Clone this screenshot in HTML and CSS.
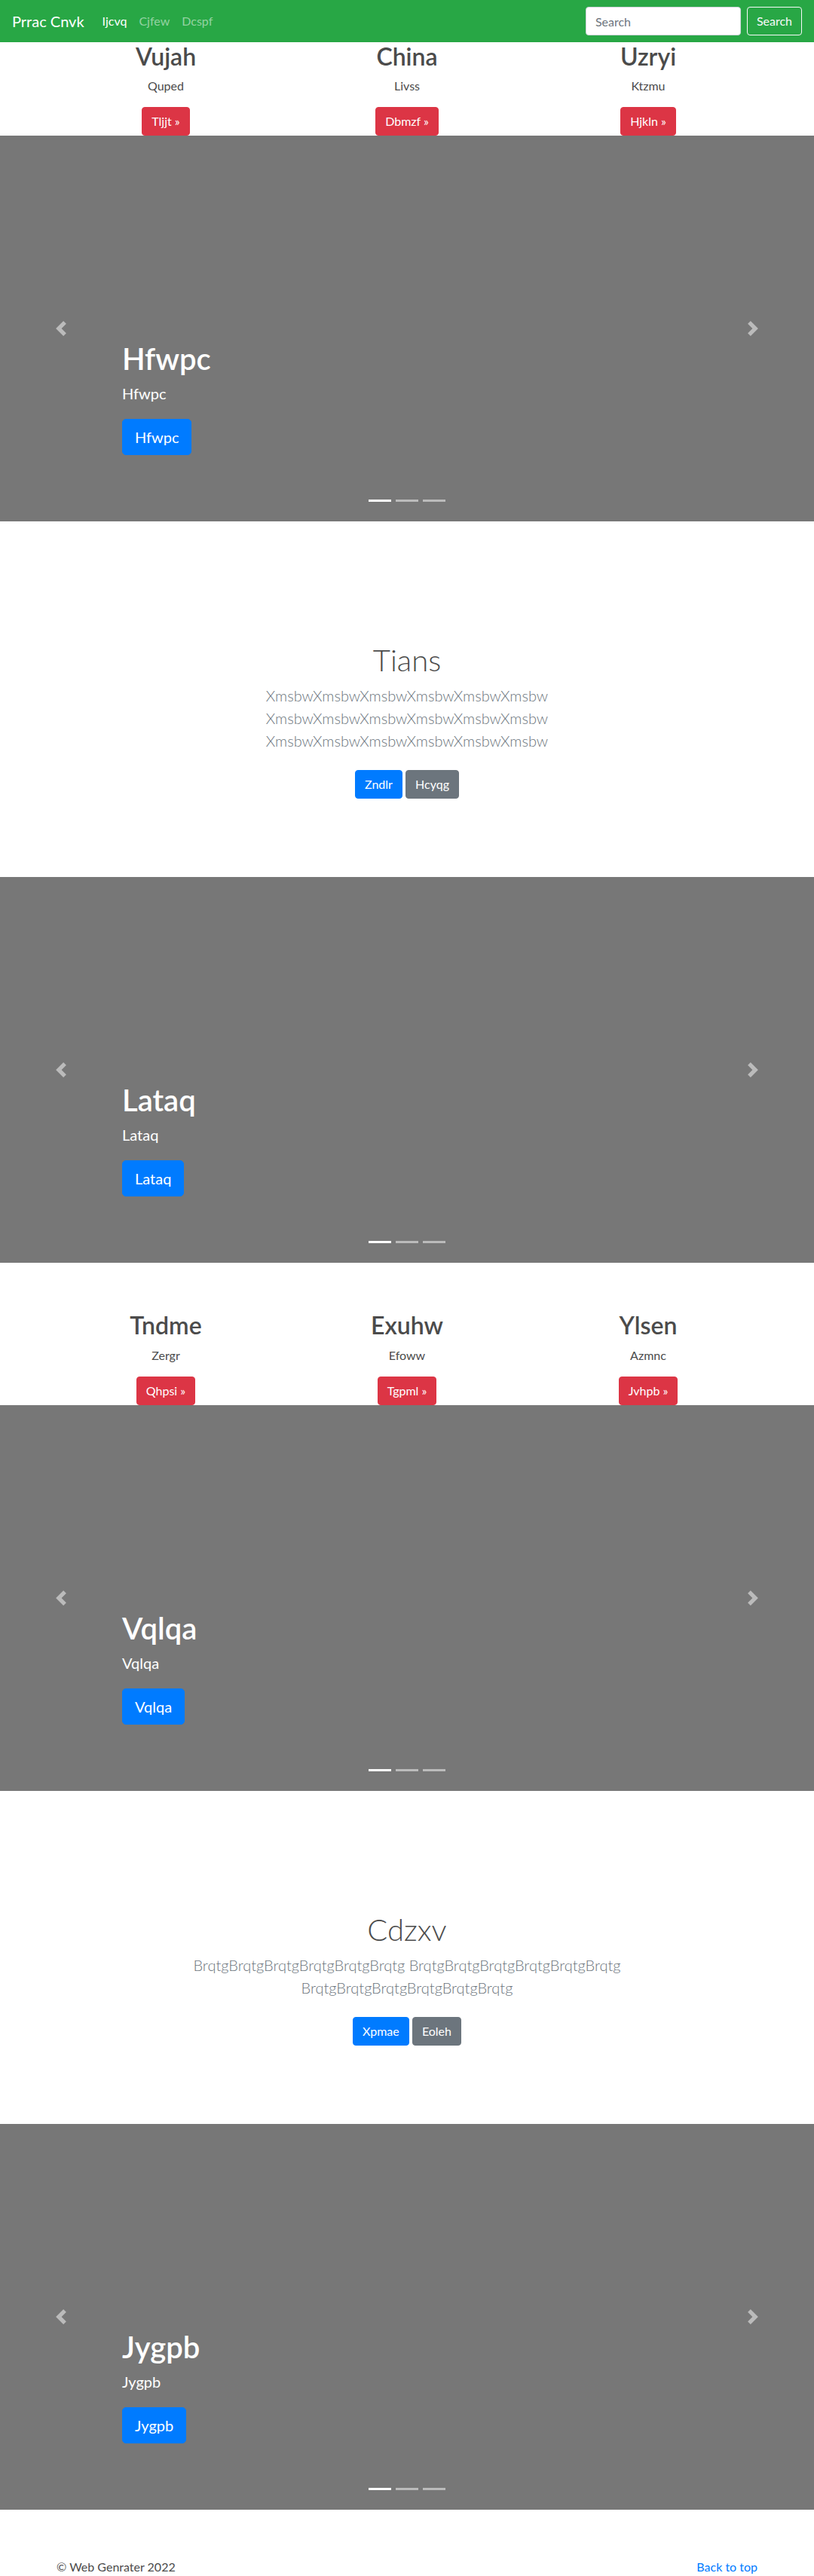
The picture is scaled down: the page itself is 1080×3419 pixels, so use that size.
FILE: index.html
```html
<!DOCTYPE html>
<html lang="en">
<head>
<meta charset="utf-8">
<title>Prrac Cnvk</title>
<link rel="stylesheet" href="styles.css">
</head>
<body>
<header class="navbar">
  <a class="brand" href="#">Prrac Cnvk</a>
  <ul class="nav">
    <li><a class="nav-link active" href="#">Ijcvq</a></li>
    <li><a class="nav-link" href="#">Cjfew</a></li>
    <li><a class="nav-link" href="#">Dcspf</a></li>
  </ul>
  <form class="search">
    <input class="search-input" type="text" placeholder="Search">
    <button class="btn btn-outline-light" type="button">Search</button>
  </form>
</header>

<main>
  <div class="container">
    <div class="row">
      <div class="col">
        <h2 class="col-title">Vujah</h2>
        <p class="col-text">Quped</p>
        <a class="btn btn-danger" href="#">Tljjt &raquo;</a>
      </div>
      <div class="col">
        <h2 class="col-title">China</h2>
        <p class="col-text">Livss</p>
        <a class="btn btn-danger" href="#">Dbmzf &raquo;</a>
      </div>
      <div class="col">
        <h2 class="col-title">Uzryi</h2>
        <p class="col-text">Ktzmu</p>
        <a class="btn btn-danger" href="#">Hjkln &raquo;</a>
      </div>
    </div>
  </div>

  <div class="carousel">
    <a class="carousel-control prev" href="#"><svg viewBox="0 0 8 8" width="20" height="20"><path d="M5.25 0l-4 4 4 4 1.5-1.5L4.25 4l2.5-2.5L5.25 0z"/></svg></a>
    <div class="carousel-caption">
      <h1 class="caption-title">Hfwpc</h1>
      <p class="caption-text">Hfwpc</p>
      <p class="caption-action"><a class="btn btn-lg btn-primary" href="#">Hfwpc</a></p>
    </div>
    <a class="carousel-control next" href="#"><svg viewBox="0 0 8 8" width="20" height="20"><path d="M2.75 0l-1.5 1.5L3.75 4l-2.5 2.5L2.75 8l4-4-4-4z"/></svg></a>
    <ol class="indicators"><li class="active"></li><li></li><li></li></ol>
  </div>

  <section class="jumbo">
    <div class="jumbo-inner">
      <h1 class="jumbo-title">Tians</h1>
      <p class="lead">XmsbwXmsbwXmsbwXmsbwXmsbwXmsbw XmsbwXmsbwXmsbwXmsbwXmsbwXmsbw XmsbwXmsbwXmsbwXmsbwXmsbwXmsbw</p>
      <p class="jumbo-actions"><a class="btn btn-primary" href="#">Zndlr</a> <a class="btn btn-secondary" href="#">Hcyqg</a></p>
    </div>
  </section>

  <div class="carousel">
    <a class="carousel-control prev" href="#"><svg viewBox="0 0 8 8" width="20" height="20"><path d="M5.25 0l-4 4 4 4 1.5-1.5L4.25 4l2.5-2.5L5.25 0z"/></svg></a>
    <div class="carousel-caption">
      <h1 class="caption-title">Lataq</h1>
      <p class="caption-text">Lataq</p>
      <p class="caption-action"><a class="btn btn-lg btn-primary" href="#">Lataq</a></p>
    </div>
    <a class="carousel-control next" href="#"><svg viewBox="0 0 8 8" width="20" height="20"><path d="M2.75 0l-1.5 1.5L3.75 4l-2.5 2.5L2.75 8l4-4-4-4z"/></svg></a>
    <ol class="indicators"><li class="active"></li><li></li><li></li></ol>
  </div>

  <div class="container">
    <div class="row">
      <div class="col">
        <h2 class="col-title">Tndme</h2>
        <p class="col-text">Zergr</p>
        <a class="btn btn-danger" href="#">Qhpsi &raquo;</a>
      </div>
      <div class="col">
        <h2 class="col-title">Exuhw</h2>
        <p class="col-text">Efoww</p>
        <a class="btn btn-danger" href="#">Tgpml &raquo;</a>
      </div>
      <div class="col">
        <h2 class="col-title">Ylsen</h2>
        <p class="col-text">Azmnc</p>
        <a class="btn btn-danger" href="#">Jvhpb &raquo;</a>
      </div>
    </div>
  </div>

  <div class="carousel">
    <a class="carousel-control prev" href="#"><svg viewBox="0 0 8 8" width="20" height="20"><path d="M5.25 0l-4 4 4 4 1.5-1.5L4.25 4l2.5-2.5L5.25 0z"/></svg></a>
    <div class="carousel-caption">
      <h1 class="caption-title">Vqlqa</h1>
      <p class="caption-text">Vqlqa</p>
      <p class="caption-action"><a class="btn btn-lg btn-primary" href="#">Vqlqa</a></p>
    </div>
    <a class="carousel-control next" href="#"><svg viewBox="0 0 8 8" width="20" height="20"><path d="M2.75 0l-1.5 1.5L3.75 4l-2.5 2.5L2.75 8l4-4-4-4z"/></svg></a>
    <ol class="indicators"><li class="active"></li><li></li><li></li></ol>
  </div>

  <section class="jumbo">
    <div class="jumbo-inner">
      <h1 class="jumbo-title">Cdzxv</h1>
      <p class="lead">BrqtgBrqtgBrqtgBrqtgBrqtgBrqtg BrqtgBrqtgBrqtgBrqtgBrqtgBrqtg BrqtgBrqtgBrqtgBrqtgBrqtgBrqtg</p>
      <p class="jumbo-actions"><a class="btn btn-primary" href="#">Xpmae</a> <a class="btn btn-secondary" href="#">Eoleh</a></p>
    </div>
  </section>

  <div class="carousel">
    <a class="carousel-control prev" href="#"><svg viewBox="0 0 8 8" width="20" height="20"><path d="M5.25 0l-4 4 4 4 1.5-1.5L4.25 4l2.5-2.5L5.25 0z"/></svg></a>
    <div class="carousel-caption">
      <h1 class="caption-title">Jygpb</h1>
      <p class="caption-text">Jygpb</p>
      <p class="caption-action"><a class="btn btn-lg btn-primary" href="#">Jygpb</a></p>
    </div>
    <a class="carousel-control next" href="#"><svg viewBox="0 0 8 8" width="20" height="20"><path d="M2.75 0l-1.5 1.5L3.75 4l-2.5 2.5L2.75 8l4-4-4-4z"/></svg></a>
    <ol class="indicators"><li class="active"></li><li></li><li></li></ol>
  </div>
</main>

<footer class="footer">
  <p class="footer-copy">&copy; Web Genrater 2022</p>
  <p class="footer-top"><a href="#">Back to top</a></p>
</footer>
</body>
</html>
```
FILE: styles.css
```css
* { box-sizing: border-box; }

html, body {
  margin: 0;
  padding: 0;
}

body {
  font-family: "Segoe UI", Lato, "Open Sans", sans-serif;
  font-size: 16px;
  line-height: 1.5;
  color: #4b4b4b;
  background: #fff;
}

a { text-decoration: none; }

/* navbar */
.navbar {
  display: flex;
  align-items: center;
  height: 56px;
  padding: 8px 16px;
  background: #28a745;
}
.brand {
  font-size: 20px;
  line-height: 30px;
  padding: 5px 0;
  margin-right: 16px;
  color: #fff;
}
.nav {
  display: flex;
  list-style: none;
  margin: 0;
  padding: 0;
}
.nav-link {
  display: block;
  padding: 8px;
  color: rgba(255, 255, 255, 0.5);
}
.nav-link.active { color: #fff; }
.search {
  display: flex;
  align-items: center;
  margin: 0 0 0 auto;
}
.search-input {
  width: 206px;
  height: 38px;
  padding: 6px 12px;
  font: inherit;
  color: #495057;
  border: 1px solid #ced4da;
  border-radius: 4px;
  background: #fff;
}
.search-input::placeholder { color: #6c757d; }

/* buttons */
.btn {
  display: inline-block;
  font-family: inherit;
  font-size: 16px;
  line-height: 24px;
  padding: 6px 12px;
  border: 1px solid transparent;
  border-radius: 4px;
  color: #fff;
  text-align: center;
  vertical-align: middle;
}
.btn-lg {
  font-size: 20px;
  line-height: 30px;
  padding: 8px 16px;
  border-radius: 5px;
}
.btn-outline-light {
  margin-left: 8px;
  background: transparent;
  border-color: #f8f9fa;
  color: #f8f9fa;
}
.btn-danger { background: #dc3545; border-color: #dc3545; }
.btn-primary { background: #007bff; border-color: #007bff; }
.btn-secondary { background: #6c757d; border-color: #6c757d; }

/* marketing rows */
.container {
  width: 960px;
  margin: 0 auto;
  padding: 0 15px;
}
.row {
  display: grid;
  grid-template-columns: repeat(3, 1fr);
  margin: 0 -15px;
}
.col {
  padding: 0 15px;
  text-align: center;
}
.col-title {
  margin: 0 0 8px;
  font-size: 32px;
  font-weight: 600;
  line-height: 1.2;
}
.col-text {
  margin: 0 12px 16px;
}

/* carousel */
.carousel {
  position: relative;
  height: 512px;
  margin-bottom: 64px;
  background: #777;
}
.carousel-control {
  position: absolute;
  top: 0;
  bottom: 0;
  width: 15%;
  display: flex;
  align-items: center;
  justify-content: center;
  opacity: 0.5;
}
.carousel-control svg { fill: #fff; display: block; }
.carousel-control.prev { left: 0; }
.carousel-control.next { right: 0; }
.carousel-caption {
  position: absolute;
  left: 15%;
  right: 15%;
  bottom: 48px;
  padding: 20px 0;
  color: #fff;
  text-align: left;
}
.caption-title {
  margin: 0 0 8px;
  font-size: 40px;
  font-weight: 600;
  line-height: 1.2;
}
.caption-text {
  margin: 0 0 20px;
  font-size: 20px;
  line-height: 1.4;
}
.caption-action { margin: 0 0 20px; }
.indicators {
  position: absolute;
  left: 0;
  right: 0;
  bottom: 26px;
  display: flex;
  justify-content: center;
  gap: 6px;
  margin: 0;
  padding: 0;
  list-style: none;
}
.indicators li {
  width: 30px;
  height: 3px;
  background: #fff;
  opacity: 0.5;
}
.indicators li.active { opacity: 1; }

/* jumbotron */
.jumbo {
  padding: 96px 0 96px;
  text-align: center;
}
.jumbo-inner {
  max-width: 640px;
  margin: 0 auto;
  padding: 0 15px;
}
.jumbo-title {
  margin: 0 0 8px;
  font-size: 40px;
  font-weight: 300;
  line-height: 1.2;
}
.lead {
  margin: 0 0 16px;
  font-size: 20px;
  font-weight: 300;
  color: #6c757d;
}
.jumbo-actions { margin: 0; }
.jumbo-actions .btn { margin: 8px 0; }

/* footer */
.footer {
  display: flex;
  justify-content: space-between;
  width: 960px;
  margin: 0 auto;
  padding: 0 15px;
}
.footer p { margin: 0 0 16px; }
.footer a { color: #007bff; }
```
